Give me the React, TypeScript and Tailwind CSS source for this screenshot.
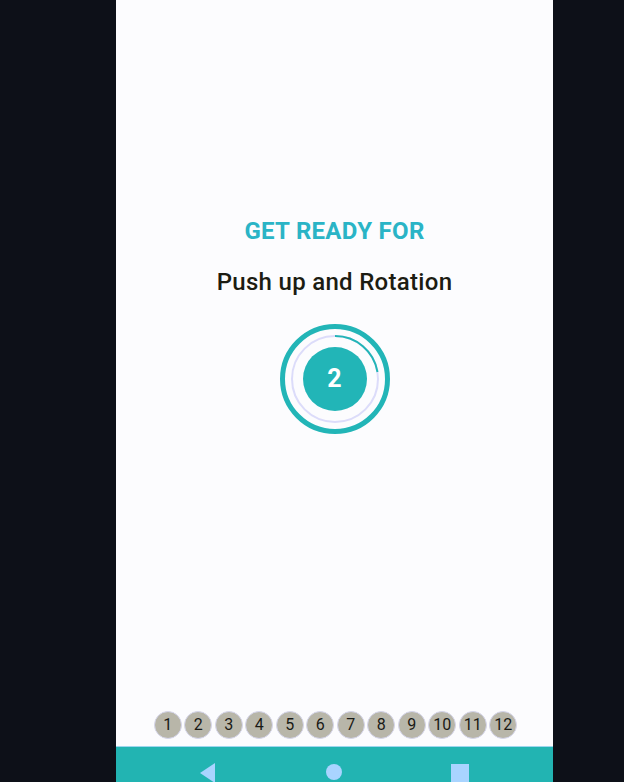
import React from "react";

export default function App() {
  const nums = [1, 2, 3, 4, 5, 6, 7, 8, 9, 10, 11, 12];
  return (
    <div className="w-[624px] h-[782px] bg-[#0d1018] overflow-hidden" style={{ fontFamily: "Roboto, 'Noto Sans', sans-serif" }}>
      <div className="ml-[116px] w-[437px] h-[782px] bg-[#fcfcfe] flex flex-col">
        <div className="pt-[217px] flex flex-col items-center">
          <div className="h-[28px] leading-[28px] text-[24px] font-bold text-[#2ab4c6] tracking-[0.3px]">GET READY FOR</div>
          <div className="mt-[23px] h-[28px] leading-[28px] text-[24px] font-medium text-[#1c1c12] tracking-[0.3px]">Push up and Rotation</div>
          <div className="mt-[28px] w-[110px] h-[110px] relative">
            <svg width="110" height="110" viewBox="0 0 110 110">
              <circle cx="55" cy="55" r="52.5" fill="none" stroke="#22b5b7" strokeWidth="5" />
              <circle cx="55" cy="55" r="43" fill="none" stroke="#dcdcfa" strokeWidth="2" />
              <path d="M 55 12 A 43 43 0 0 1 97.5 48" fill="none" stroke="#22b5b7" strokeWidth="2" />
              <circle cx="55" cy="55" r="32" fill="#22b5b7" />
            </svg>
            <div className="absolute inset-0 flex items-center justify-center text-white font-bold text-[25px]">2</div>
          </div>
        </div>
        <div className="flex-1" />
        <div className="flex justify-center gap-[2.5px] pl-[2px] mb-[7px]">
          {nums.map((n) => (
            <div key={n} className="w-[28px] h-[28px] rounded-full bg-[#b8b6a9] border border-[#d6d6ec] flex items-center justify-center text-[16px] text-[#1a1a16]">
              {n}
            </div>
          ))}
        </div>
        <div className="h-[36px] bg-[#22b4b2] border-t border-[#9fd6ee] relative overflow-hidden">
          <svg className="absolute left-[84px] top-[16px]" width="16" height="20" viewBox="0 0 16 20">
            <polygon points="15,0 15,20 0,10" fill="#a9d4ff" />
          </svg>
          <div className="absolute left-[210px] top-[17px] w-[16px] h-[16px] rounded-full bg-[#a9d4ff]" />
          <div className="absolute left-[335px] top-[17px] w-[18px] h-[18px] bg-[#a9d4ff]" />
        </div>
      </div>
    </div>
  );
}
